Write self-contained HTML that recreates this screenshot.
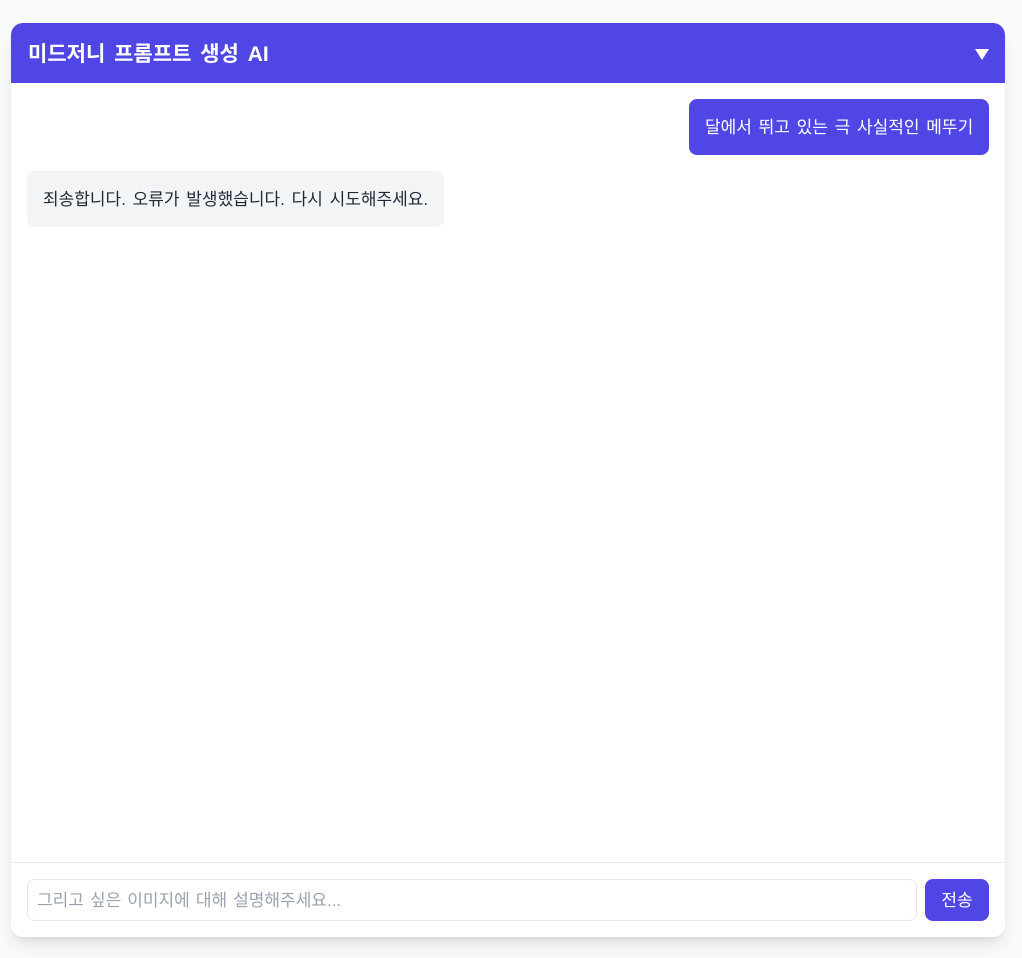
<!DOCTYPE html>
<html lang="ko">
<head>
<meta charset="utf-8">
<title>미드저니 프롬프트 생성 AI</title>
<style>
*{box-sizing:border-box;margin:0;padding:0}
html,body{width:1022px;height:958px;overflow:hidden;background:#f9fafb}
body{position:relative;font-family:"Liberation Sans","Noto Sans CJK KR",sans-serif;font-size:17px;word-spacing:2px}
.card{position:absolute;left:11px;top:23px;width:994px;height:914px;background:#fff;border-radius:12px;box-shadow:0 10px 15px -3px rgba(0,0,0,.1),0 4px 6px -2px rgba(0,0,0,.05)}
.head{position:absolute;left:0;top:0;width:994px;height:60px;background:#4f46e5;border-radius:12px 12px 0 0}
.title{position:absolute;left:17px;top:18px;font-size:21px;word-spacing:3px;line-height:28px;font-weight:700;color:#fff;white-space:nowrap}
.arrow{position:absolute;left:964px;top:26px}
.bubble{position:absolute;height:56px;border-radius:8px;line-height:58px;padding:0 16px;white-space:nowrap}
.user{left:678px;top:76px;width:300px;background:#4f46e5;color:#fff}
.bot{left:16px;top:148px;width:417px;background:#f3f4f6;color:#1f2937}
.bar{position:absolute;left:0;top:839px;width:994px;height:75px;border-top:1px solid #e5e7eb}
.input{position:absolute;left:16px;top:16px;width:890px;height:42px;border:1px solid #e5e7eb;border-radius:8px;padding-left:9px;line-height:41px;color:#9ca3af;white-space:nowrap;background:#fff;word-spacing:1.3px}
.btn{position:absolute;left:914px;top:16px;width:64px;height:42px;background:#4f46e5;border-radius:8px;color:#fff;text-align:center;line-height:43px}
</style>
</head>
<body>
<div class="card">
  <div class="head">
    <div class="title">미드저니 프롬프트 생성 AI</div>
    <svg class="arrow" width="14" height="11" viewBox="0 0 14 11"><path d="M0 0H14L7 11Z" fill="#fff"/></svg>
  </div>
  <div class="bubble user">달에서 뛰고 있는 극 사실적인 메뚜기</div>
  <div class="bubble bot">죄송합니다. 오류가 발생했습니다. 다시 시도해주세요.</div>
  <div class="bar">
    <div class="input">그리고 싶은 이미지에 대해 설명해주세요...</div>
    <div class="btn">전송</div>
  </div>
</div>
</body>
</html>
